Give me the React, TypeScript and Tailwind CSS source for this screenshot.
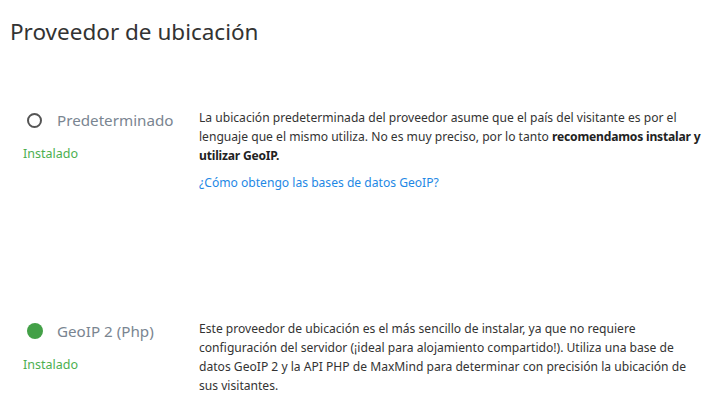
const font = { fontFamily: '"Noto Sans", "Open Sans", sans-serif' };

type Provider = {
  name: string;
  active: boolean;
  description: React.ReactNode;
  link?: string;
};

const providers: Provider[] = [
  {
    name: 'Predeterminado',
    active: false,
    description: (
      <>
        La ubicación predeterminada del proveedor asume que el país del visitante es por el lenguaje que el
        mismo utiliza. No es muy preciso, por lo tanto{' '}
        <strong className="font-bold tracking-[-0.2px] text-[#222]">recomendamos instalar y utilizar GeoIP.</strong>
      </>
    ),
    link: '¿Cómo obtengo las bases de datos GeoIP?',
  },
  {
    name: 'GeoIP 2 (Php)',
    active: true,
    description:
      'Este proveedor de ubicación es el más sencillo de instalar, ya que no requiere configuración del servidor (¡ideal para alojamiento compartido!). Utiliza una base de datos GeoIP 2 y la API PHP de MaxMind para determinar con precisión la ubicación de sus visitantes.',
  },
];

function Radio({ active }: { active: boolean }) {
  if (active) {
    return <span className="block h-4 w-4 rounded-full bg-[#43a047]" />;
  }
  return <span className="block h-[15px] w-[15px] rounded-full border-2 border-[#555]" />;
}

export default function App() {
  return (
    <div className="min-h-[419px] w-[717px] bg-white px-[10px] text-[#333]" style={font}>
      <h2 className="pt-[17px] text-[22.5px] leading-[30px] font-normal text-[#333]">Proveedor de ubicación</h2>

      <div className="mt-[61px] flex flex-col gap-[100px]">
        {providers.map((p) => (
          <div key={p.name} className="flex min-h-[111px]">
            <div className="w-[189px] shrink-0 pl-[13px]">
              <label className="flex h-6 items-center">
                <span className="flex w-[34px] items-center pl-[4px]">
                  <Radio active={p.active} />
                </span>
                <span className="text-[15.2px] text-[#7a8591]">{p.name}</span>
              </label>
              <div className="mt-[14px] text-[12.5px] leading-4 text-[#4caf50]">Instalado</div>
            </div>
            <div className="w-[510px] text-[12.1px] leading-[19px] text-[#333]">
              <p>{p.description}</p>
              {p.link && (
                <p className="mt-[8px]">
                  <a href="#" className="text-[#1e88e5]">
                    {p.link}
                  </a>
                </p>
              )}
            </div>
          </div>
        ))}
      </div>
    </div>
  );
}
